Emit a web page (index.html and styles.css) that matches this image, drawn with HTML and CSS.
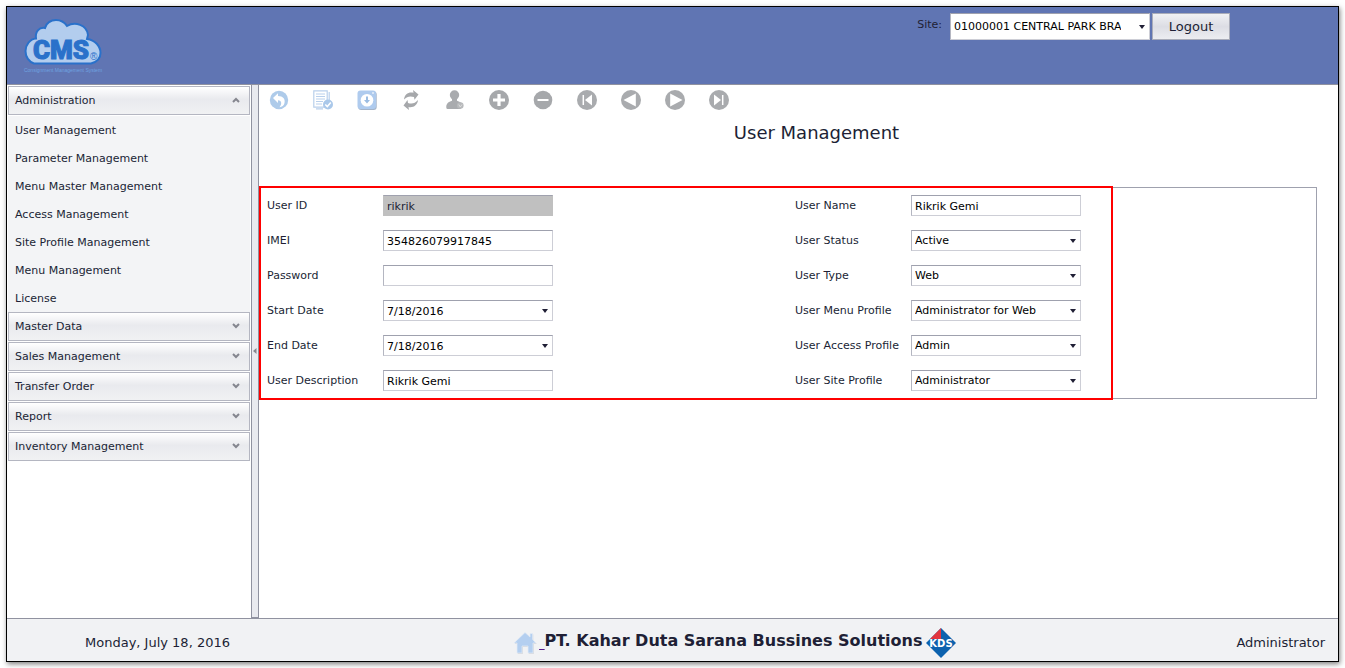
FILE: index.html
```html
<!DOCTYPE html>
<html lang="en">
<head>
<meta charset="utf-8">
<title>User Management</title>
<link rel="stylesheet" href="styles.css">
</head>
<body>
<div class="app">
  <header class="topbar">
    <svg class="logo" width="80" height="56" viewBox="0 0 80 56" role="img" aria-label="CMS">
      <path d="M11 45.500C6 44 2.500 39 2.500 33C2.500 27 7 21 13 20.500C12 14 16 9 22 10C23 5 28 2 33 2C38 2 42 5 44 8C52 3 64 7 65 17L64 21C72 22 77.500 28 77.500 35C77.500 40 74 44 68 45.500Z" fill="#b3cdee" stroke="#2a71ca" stroke-width="2"/>
      <text class="logo-name" x="38" y="41" text-anchor="middle">CMS</text>
      <text class="logo-mark" x="67" y="42">®</text>
      <text class="logo-tag" x="40" y="54" text-anchor="middle">Consignment Management System</text>
    </svg>
    <div class="session">
      <label for="site">Site:</label>
      <span class="picker site-picker"><select id="site" class="field"><option>01000001 CENTRAL PARK BRANCH</option></select></span>
      <button type="button" class="logout">Logout</button>
    </div>
  </header>

  <div class="body">
    <nav class="sidebar">
      <button type="button" class="group" aria-expanded="true">Administration
        <svg class="chevron" width="8" height="6" viewBox="0 0 8 6"><path d="M1 5 4 2 7 5"/></svg></button>
      <div class="items">
        <a href="#">User Management</a>
        <a href="#">Parameter Management</a>
        <a href="#">Menu Master Management</a>
        <a href="#">Access Management</a>
        <a href="#">Site Profile Management</a>
        <a href="#">Menu Management</a>
        <a href="#">License</a>
      </div>
      <button type="button" class="group">Master Data
        <svg class="chevron" width="8" height="6" viewBox="0 0 8 6"><path d="M1 1 4 4 7 1"/></svg></button>
      <button type="button" class="group">Sales Management
        <svg class="chevron" width="8" height="6" viewBox="0 0 8 6"><path d="M1 1 4 4 7 1"/></svg></button>
      <button type="button" class="group">Transfer Order
        <svg class="chevron" width="8" height="6" viewBox="0 0 8 6"><path d="M1 1 4 4 7 1"/></svg></button>
      <button type="button" class="group">Report
        <svg class="chevron" width="8" height="6" viewBox="0 0 8 6"><path d="M1 1 4 4 7 1"/></svg></button>
      <button type="button" class="group">Inventory Management
        <svg class="chevron" width="8" height="6" viewBox="0 0 8 6"><path d="M1 1 4 4 7 1"/></svg></button>
    </nav>

    <div class="splitter"><svg width="4" height="6" viewBox="0 0 4 6"><path d="M3.500 0V6L0 3Z" fill="#85868f"/></svg></div>

    <main class="content">
      <div class="toolbar">
        <button type="button" aria-label="Undo"><svg viewBox="0 0 20 20"><circle cx="10" cy="10" r="9.200" fill="#aecbea"/><path d="M4 8 9 3.200V6C14 6 16.500 9 15.500 13C15 15.500 13 17 10.500 17.200C13 14.500 13 10.500 9 10.300V13Z" fill="#fff"/></svg></button>
        <button type="button" aria-label="Save"><svg viewBox="0 0 20 20"><path d="M.8.800H14.200V11.500L11 17.200H.8ZM16.200 2V10M3 18.800H10" fill="#fff" stroke="#b9d0ec" stroke-width="1.200"/><path d="M3 4H12M3 6.500H12M3 9H12M3 11.500H10M3 14H9" stroke="#b9d0ec"/><circle cx="15" cy="14.500" r="5" fill="#aac8ea"/><path d="M12.300 14.500 14.300 16.600 17.800 12.400" fill="none" stroke="#fff" stroke-width="1.500"/></svg></button>
        <button type="button" aria-label="Download"><svg viewBox="0 0 20 20"><rect x="1.200" y="1.400" width="18.500" height="18.500" rx="3" fill="#a5b4c8"/><rect x=".5" y=".5" width="18.500" height="18.500" rx="3" fill="#afcbee"/><circle cx="10" cy="10.300" r="6.300" fill="#fff"/><path d="M9 6.500H11V10H13L10 13.500 7 10H9Z" fill="#9bbce2"/><path d="M15 3H17" stroke="#fff"/></svg></button>
        <button type="button" aria-label="Refresh"><svg viewBox="0 0 20 20"><g fill="#a6a8ab"><path d="M3 9.500C3.500 4 8 1.500 12.500 2.800L12 0 17.500 4.500 13.500 9.800 13 7C9 5.800 6 6.500 3 9.500Z"/><path d="M17 10C16.500 15.500 12 18 7.500 17L8 20 2.500 15.500 6.500 10 7 13C11 14.200 14 13.500 17 10Z"/></g></svg></button>
        <button type="button" aria-label="User"><svg viewBox="0 0 20 20"><g fill="#a9abae"><circle cx="9.500" cy="5" r="4.700"/><path d="M1.300 17.500C1 13.500 3.500 12 7 10.800V9H12V10.800C15.500 12 17.500 13 18 16L15.500 19H3.500C2 19 1.300 18.500 1.300 17.500Z"/></g><circle cx="15.300" cy="15.500" r="3.300" fill="#b7b9bb"/><path d="M13.800 14.500 15.300 17 17 14.500" fill="none" stroke="#e8e8e8" stroke-width=".7"/></svg></button>
        <button type="button" aria-label="Add"><svg viewBox="0 0 20 20"><circle cx="10" cy="10" r="10" fill="#a6a8ab"/><path d="M10 4V16M4 10H16" stroke="#fff" stroke-width="3.200"/></svg></button>
        <button type="button" aria-label="Remove"><svg viewBox="0 0 20 20"><circle cx="10" cy="10" r="9.300" fill="#a6a8ab"/><path d="M4.500 10H15.500" stroke="#fff" stroke-width="2"/></svg></button>
        <button type="button" aria-label="First"><svg viewBox="0 0 20 20"><circle cx="10" cy="10" r="10" fill="#a9abae"/><path d="M6.300 5V15" stroke="#fff" stroke-width="1.500"/><path d="M15 4.500V15.500L8 10Z" fill="#fff"/></svg></button>
        <button type="button" aria-label="Previous"><svg viewBox="0 0 20 20"><circle cx="10" cy="10" r="10" fill="#a9abae"/><path d="M14.800 3.500V16.500L2.500 10Z" fill="#fff"/></svg></button>
        <button type="button" aria-label="Next"><svg viewBox="0 0 20 20"><circle cx="10" cy="10" r="10" fill="#a9abae"/><path d="M5.200 3.500V16.500L17.500 10Z" fill="#fff"/></svg></button>
        <button type="button" aria-label="Last"><svg viewBox="0 0 20 20"><circle cx="10" cy="10" r="10" fill="#a9abae"/><path d="M13.700 5V15" stroke="#fff" stroke-width="1.500"/><path d="M5 4.500V15.500L12 10Z" fill="#fff"/></svg></button>
      </div>
      <h1 class="title">User Management</h1>

      <form class="panel">
        <div class="highlight">
          <div class="column">
            <label for="uid">User ID</label><input id="uid" class="field locked" value="rikrik" readonly>
            <label for="imei">IMEI</label><input id="imei" class="field" value="354826079917845">
            <label for="pwd">Password</label><input id="pwd" class="field" type="password">
            <label for="start">Start Date</label><span class="picker"><input id="start" class="field" value="7/18/2016"></span>
            <label for="end">End Date</label><span class="picker"><input id="end" class="field" value="7/18/2016"></span>
            <label for="desc">User Description</label><input id="desc" class="field" value="Rikrik Gemi">
          </div>
          <div class="column">
            <label for="name">User Name</label><input id="name" class="field" value="Rikrik Gemi">
            <label for="status">User Status</label><span class="picker"><select id="status" class="field"><option>Active</option></select></span>
            <label for="type">User Type</label><span class="picker"><select id="type" class="field"><option>Web</option></select></span>
            <label for="menu">User Menu Profile</label><span class="picker"><select id="menu" class="field"><option>Administrator for Web</option></select></span>
            <label for="access">User Access Profile</label><span class="picker"><select id="access" class="field"><option>Admin</option></select></span>
            <label for="profile">User Site Profile</label><span class="picker"><select id="profile" class="field"><option>Administrator</option></select></span>
          </div>
        </div>
      </form>
    </main>
  </div>

  <footer class="footer">
    <span class="date">Monday, July 18, 2016</span>
    <div class="company">
      <a href="#" class="home" aria-label="Home"><svg width="24" height="24" viewBox="0 0 24 24"><path d="M12 1.500 1 12H4V22H9V15H15V22H20V12H23L19.500 8.500V2.500H17V6Z" transform="translate(.7 .8)" fill="#c9ccd2"/><path d="M12 1.500 1 12H4V22H9V15H15V22H20V12H23L19.500 8.500V2.500H17V6Z" fill="#b4cff0" stroke="#e4ecf6" stroke-width=".7"/></svg><span>&nbsp;</span></a>
      <strong>PT. Kahar Duta Sarana Bussines Solutions</strong>
      <svg class="kds" width="30" height="30" viewBox="0 0 30 30" role="img" aria-label="KDS"><path d="M15 0 30 15 15 30 0 15Z" fill="#0c62ae"/><path d="M15 0V11L4 11Z" fill="#e2353f"/><text x="15" y="19" text-anchor="middle">KDS</text></svg>
    </div>
    <span class="role">Administrator</span>
  </footer>
</div>
</body>
</html>
```
FILE: styles.css
```css
* { box-sizing: border-box; }

body {
  margin: 0;
  padding: 6px;
  height: 100vh;
  background: #fff;
  color: #201f35;
  font: 11px/16px "DejaVu Sans", Verdana, sans-serif;
}

button, input, select { font: inherit; color: inherit; margin: 0; }

.app {
  height: 100%;
  display: flex;
  flex-direction: column;
  border: 1px solid #000;
  box-shadow: 1px 2px 5px rgba(0, 0, 0, .5);
}

.topbar {
  display: flex;
  justify-content: space-between;
  align-items: flex-start;
  height: 78px;
  padding: 6px 108px 0 16px;
  background: #6075b3;
  border-bottom: 1px solid #9092a0;
}

.logo { margin-top: 5px; }
.logo-name { font: 900 26px Roboto, "Liberation Sans", sans-serif; fill: #2a71ca; stroke: #2a71ca; stroke-width: 1px; }
.logo-mark { font: 10px "Liberation Sans", sans-serif; fill: #2a71ca; }
.logo-tag { font: 5px "Liberation Sans", sans-serif; fill: #6fa3e0; }

.session { display: flex; gap: 2px; }
.session label { margin: 4px 6px 0 0; }
.site-picker { width: 200px; }
.site-picker .field { height: 27px; padding-right: 28px; }

.logout {
  width: 78px;
  height: 27px;
  padding: 0;
  border: 1px solid #a9acb9;
  background: linear-gradient(#f0f1f4, #dcdde4 50%, #ecedf1);
  font-size: 13px;
}

.body { flex: 1; display: flex; min-height: 0; }

.sidebar {
  width: 244px;
  padding: 1px 1px 0;
  display: flex;
  flex-direction: column;
  gap: 1px;
}

.group {
  display: flex;
  align-items: center;
  justify-content: space-between;
  height: 29px;
  padding: 1px 9px 0 6px;
  border: 1px solid #b4b6c1;
  background: linear-gradient(#fff, #e9eaee 45%, #f0f1f3);
  text-align: left;
}

.chevron { margin-bottom: 2px; }
.chevron path { fill: none; stroke: #85868f; stroke-width: 2; }

.items { display: flex; flex-direction: column; margin-bottom: -1px; background: #f3f4f6; }
.items a { padding: 7px 7px 5px; color: inherit; text-decoration: none; }

.splitter {
  width: 8px;
  display: flex;
  align-items: center;
  justify-content: center;
  border: 1px solid #9092a0;
  border-top: 0;
  background: #e9eaef;
}

.content { flex: 1; min-width: 0; }

.toolbar { display: flex; gap: 24px; padding: 5px 10px; }
.toolbar button { width: 20px; height: 20px; padding: 0; border: 0; background: none; }
.toolbar svg { display: block; width: 20px; height: 20px; }

.title { margin: 0 0 42px; padding: 6px 0 0 36px; font-size: 18px; line-height: 24px; font-weight: normal; text-align: center; }

.panel { margin-right: 21px; border: 1px solid #9fa1ae; border-left: 0; height: 212px; }

.highlight {
  width: 854px;
  margin: -2px 0;
  padding: 7px 6px;
  display: flex;
  gap: 242px;
  border: 2px solid #f00;
}

.column { display: grid; grid-template-columns: 116px 170px; grid-auto-rows: 21px; row-gap: 14px; align-items: center; white-space: nowrap; }
.column label { padding-top: 1px; }

.field {
  display: block;
  width: 100%;
  height: 21px;
  padding: 1px 3px 0;
  appearance: none;
  border: 1px solid;
  border-color: #9fa1ae #cdced6 #cdced6 #b4b6c1;
  border-radius: 0;
  background: #fff;
  color: #000;
}
.locked { background: #c0c0c0; border-color: #9fa1ae #c0c0c0 #c0c0c0; color: #201f35; }

.picker { position: relative; display: block; }
.picker::after {
  content: "";
  position: absolute;
  right: 5px;
  top: calc(50% - 2px);
  border: solid transparent;
  border-width: 4px 3px 0;
  border-top-color: #201f35;
  pointer-events: none;
}

.footer {
  height: 43px;
  display: grid;
  grid-template-columns: 43fr auto 37fr;
  align-items: center;
  padding: 5px 13px 0 78px;
  border-top: 1px solid #9092a0;
  background: #f1f2f4;
  font-size: 13px;
}
.company { display: flex; align-items: center; font-size: 16px; }
.company strong { padding-bottom: 3px; }
.company .home { display: flex; align-items: center; gap: 2px; color: #551a8b; }
.home span { text-decoration: underline; }
.kds { margin-left: 4px; }
.kds text { font: bold 10px "DejaVu Sans", sans-serif; fill: #fff; }
.role { text-align: right; }
```
